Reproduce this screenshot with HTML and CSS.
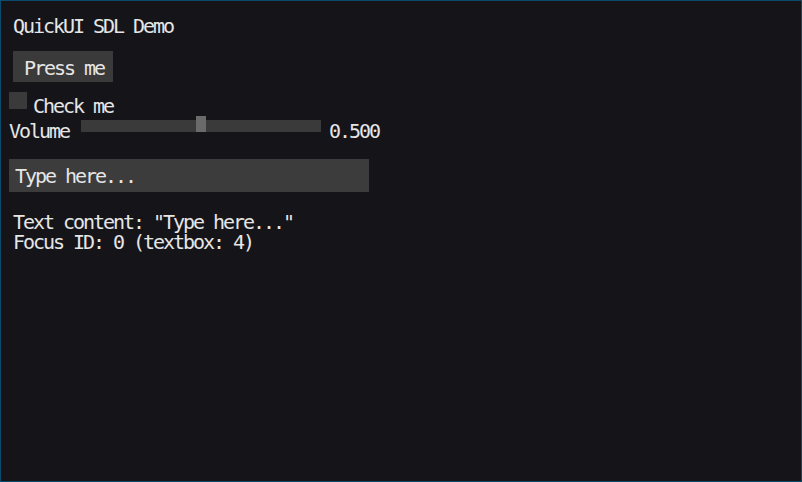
FILE: index.html
```html
<!DOCTYPE html>
<html>
<head>
<meta charset="utf-8">
<link rel="stylesheet" href="styles.css">
</head>
<body>
<div class="app">
  <div class="title">QuickUI SDL Demo</div>
  <div class="button">Press me</div>
  <div class="check-row">
    <span class="checkbox"></span>
    <span class="check-label">Check me</span>
  </div>
  <div class="slider-row">
    <span class="slider-label">Volume</span>
    <div class="slider">
      <div class="track"></div>
      <div class="thumb" style="left: 115px"></div>
    </div>
    <span class="slider-value">0.500</span>
  </div>
  <div class="textbox">Type here...</div>
  <div class="info">Text content: "Type here..."
Focus ID: 0 (textbox: 4)</div>
</div>
</body>
</html>
```

FILE: styles.css
```css
html, body {
  margin: 0;
  padding: 0;
  background: #151519;
}

.app {
  box-sizing: border-box;
  width: 802px;
  height: 482px;
  border: 1px solid #0c4a6b;
  background: #151519;
  padding: 15px 0 0 8px;
  display: flex;
  flex-direction: column;
  align-items: flex-start;
  font-family: "DejaVu Sans Mono", monospace;
  font-size: 20px;
  line-height: 20px;
  letter-spacing: -2.04px;
  color: #e6e6e6;
}

.title {
  margin-left: 4px;
  height: 20px;
}

.button {
  margin-top: 15px;
  margin-left: 4px;
  width: 100px;
  box-sizing: border-box;
  padding: 7px 0 4px 11px;
  background: #3a3a3a;
}

.check-row {
  margin-top: 10px;
  display: flex;
  align-items: flex-start;
}

.checkbox {
  width: 18px;
  height: 17px;
  background: #3a3a3a;
}

.check-label {
  margin-left: 6px;
  margin-top: 4px;
}

.slider-row {
  display: flex;
  align-items: flex-start;
}

.slider-label {
  margin-top: 5px;
  width: 72px;
}

.slider {
  position: relative;
  width: 240px;
  height: 16px;
}

.track {
  margin-top: 4px;
  height: 12px;
  background: #3a3a3a;
}

.thumb {
  position: absolute;
  top: 0;
  width: 10px;
  height: 16px;
  background: #6a6a6a;
}

.slider-value {
  margin-top: 5px;
  margin-left: 8px;
}

.textbox {
  margin-top: 18px;
  width: 360px;
  height: 33px;
  box-sizing: border-box;
  padding: 7px 0 0 6px;
  background: #3c3c3c;
}

.info {
  margin-top: 20px;
  margin-left: 4px;
  white-space: pre-line;
}
```
